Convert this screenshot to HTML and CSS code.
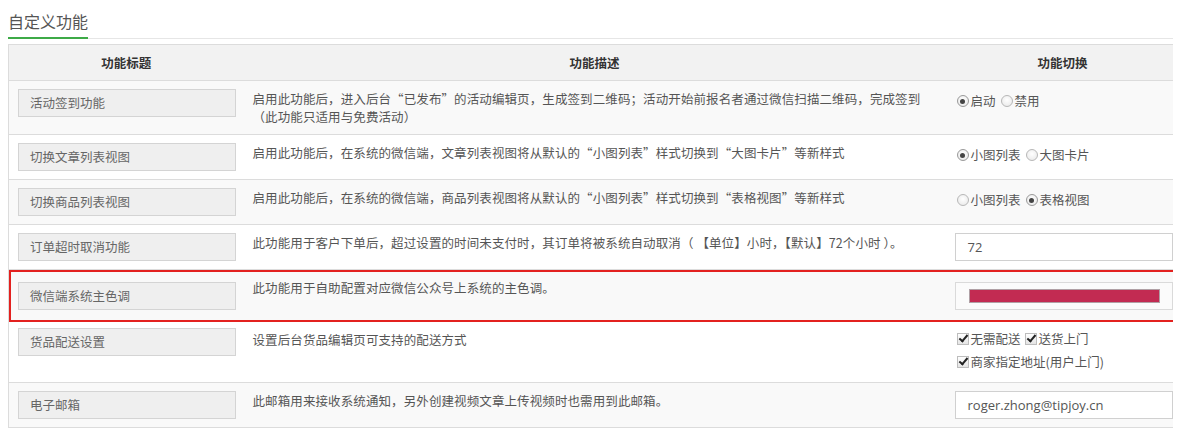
FILE: index.html
```html
<!DOCTYPE html>
<html lang="zh-CN">
<head>
<meta charset="utf-8">
<title>自定义功能</title>
<link rel="stylesheet" href="styles.css">
</head>
<body>
<div class="tabs"><span class="tab active">自定义功能</span></div>
<table class="fn-table">
  <colgroup>
    <col class="c1"><col class="c2"><col class="c3">
  </colgroup>
  <thead>
    <tr><th>功能标题</th><th>功能描述</th><th>功能切换</th></tr>
  </thead>
  <tbody>
    <tr class="odd">
      <td><div class="label">活动签到功能</div></td>
      <td class="desc">启用此功能后，进入后台“已发布”的活动编辑页，生成签到二维码；活动开始前报名者通过微信扫描二维码，完成签到<br>（此功能只适用与免费活动）</td>
      <td class="opt"><label class="choice"><span class="radio on"></span>启动</label><label class="choice"><span class="radio"></span>禁用</label></td>
    </tr>
    <tr>
      <td><div class="label">切换文章列表视图</div></td>
      <td class="desc">启用此功能后，在系统的微信端，文章列表视图将从默认的“小图列表”样式切换到“大图卡片”等新样式</td>
      <td class="opt"><label class="choice"><span class="radio on"></span>小图列表</label><label class="choice"><span class="radio"></span>大图卡片</label></td>
    </tr>
    <tr class="odd">
      <td><div class="label">切换商品列表视图</div></td>
      <td class="desc">启用此功能后，在系统的微信端，商品列表视图将从默认的“小图列表”样式切换到“表格视图”等新样式</td>
      <td class="opt"><label class="choice"><span class="radio"></span>小图列表</label><label class="choice"><span class="radio on"></span>表格视图</label></td>
    </tr>
    <tr>
      <td><div class="label">订单超时取消功能</div></td>
      <td class="desc">此功能用于客户下单后，超过设置的时间未支付时，其订单将被系统自动取消（ 【单位】小时，【默认】72个小时 ）。</td>
      <td><div class="input">72</div></td>
    </tr>
    <tr class="odd highlight">
      <td><div class="label">微信端系统主色调</div></td>
      <td class="desc">此功能用于自助配置对应微信公众号上系统的主色调。</td>
      <td><div class="input color"><span class="swatch"></span></div></td>
    </tr>
    <tr class="after-hl">
      <td><div class="label">货品配送设置</div></td>
      <td class="desc">设置后台货品编辑页可支持的配送方式</td>
      <td class="checks">
        <div><label class="choice"><span class="check"></span>无需配送</label><label class="choice"><span class="check"></span>送货上门</label></div>
        <div><label class="choice"><span class="check"></span>商家指定地址(用户上门)</label></div>
      </td>
    </tr>
    <tr class="odd">
      <td><div class="label">电子邮箱</div></td>
      <td class="desc">此邮箱用来接收系统通知，另外创建视频文章上传视频时也需用到此邮箱。</td>
      <td><div class="input">roger.zhong@tipjoy.cn</div></td>
    </tr>
  </tbody>
</table>
</body>
</html>
```
FILE: styles.css
```css
body {
  margin: 8px;
  font-family: "Noto Sans CJK SC", "Liberation Sans", sans-serif;
  font-size: 12.5px;
  color: #444;
  background: #fff;
}
.tabs {
  border-bottom: 1px solid #e6e6e6;
  width: 1173px;
}
.tab {
  display: inline-block;
  font-size: 16px;
  line-height: 26px;
  padding-bottom: 3px;
  color: #555;
  border-bottom: 2px solid #3daa47;
  margin-bottom: -1px;
}
.fn-table {
  margin-top: 5px;
  width: 1171px;
  border-collapse: collapse;
  table-layout: fixed;
  border-left: 1px solid #dcdcdc;
}
.c1 { width: 235px; }
.c2 { width: 702px; }
.c3 { width: 234px; }
.fn-table th {
  height: 35px;
  padding: 0;
  background: #f2f2f2;
  font-weight: bold;
  color: #333;
  font-size: 12.5px;
  border-top: 1px solid #dcdcdc;
  border-bottom: 1px solid #dcdcdc;
}
.fn-table td {
  vertical-align: top;
  padding: 8px 9px 8px 9px;
  border-bottom: 1px solid #dcdcdc;
  line-height: 18px;
}
.fn-table td:first-child { padding-right: 8px; }
.fn-table td:last-child { padding-right: 7px; }
.fn-table tr.odd td { background: #f9f9f9; }
.label {
  height: 26px;
  line-height: 26px;
  border: 1px solid #d4d4d4;
  background: #efefef;
  color: #666;
  padding-left: 11px;
}
.desc {
  color: #555;
  padding-top: 9px !important;
  letter-spacing: 0.1px;
}
.opt { line-height: 24px !important; }
.choice {
  display: inline-flex;
  align-items: center;
  color: #555;
  margin-right: 3px;
}
.radio {
  width: 10px;
  height: 10px;
  border-radius: 50%;
  border: 1px solid #b8b8b8;
  background: radial-gradient(circle at 50% 40%, #fff 0%, #e6e6e6 100%);
  margin: 0 2px 0 2px;
  position: relative;
}
.radio.on { border-color: #9a9a9a; }
.radio.on::after {
  content: "";
  position: absolute;
  left: 2.5px;
  top: 2.5px;
  width: 5px;
  height: 5px;
  border-radius: 50%;
  background: #444;
}
.check {
  width: 10px;
  height: 10px;
  border: 1px solid #bdbdbd;
  background: linear-gradient(#fff, #e4e4e4);
  margin: 0 2px 0 2px;
  position: relative;
}
.check::after {
  content: "";
  position: absolute;
  left: 3px;
  top: -1px;
  width: 3px;
  height: 7px;
  border: solid #222;
  border-width: 0 2px 2px 0;
  transform: rotate(40deg);
}
.input {
  height: 26px;
  line-height: 26px;
  border: 1px solid #d0d0d0;
  background: #fff;
  padding-left: 12px;
  font-family: "Open Sans", "Liberation Sans", sans-serif;
  font-size: 13px;
  color: #555;
}
.input.color {
  padding: 6px 12px 0 13px;
  height: 20px;
  background: #fbfbfb;
  border-color: #dadada;
}
.swatch {
  display: block;
  height: 12px;
  background: #c22b52;
  border: 1px solid #b0a0a5;
}
tr.highlight td {
  padding-top: 12px;
  padding-bottom: 11px;
}
tr.highlight {
  outline: 2px solid #e3211f;
  outline-offset: -2px;
}
tr.after-hl td { padding-top: 6px; }
.checks { line-height: 22px !important; }
.checks .choice { margin-right: 2px; }
```
